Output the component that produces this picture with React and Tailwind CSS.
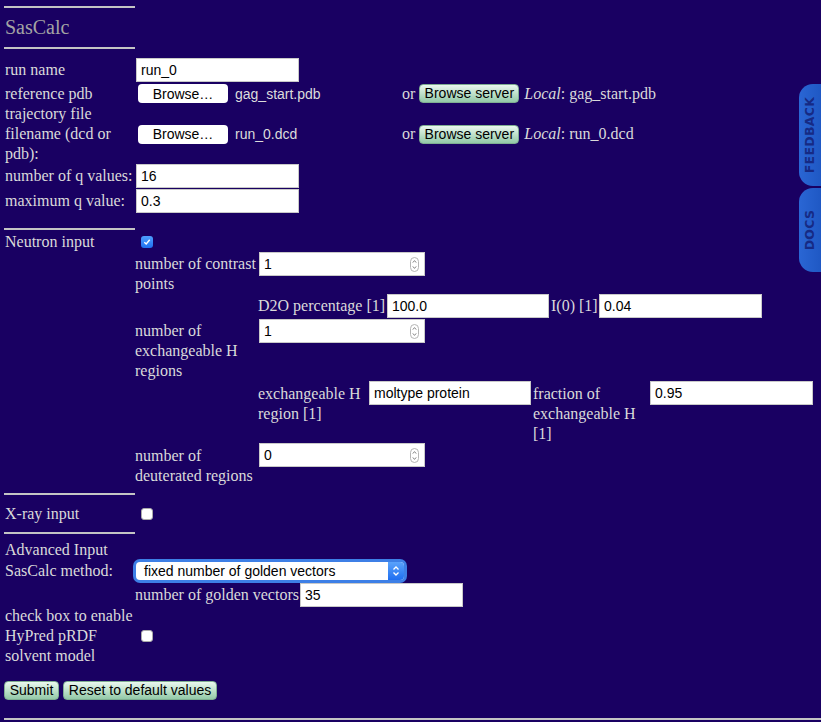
import React from "react";

const Rule = ({ className = "w-[131px]" }) => (
    <div className={`h-[2px] bg-[#c4c4c4] ${className}`} />
);

const TextBox = ({ value, width = "w-[163px]" }) => (
    <div className={`h-[24px] ${width} shrink-0 border border-[#c9c9c9] bg-white px-[4px] font-['Liberation_Sans',sans-serif] text-[14px] leading-[22px] text-black`}>
        {value}
    </div>
);

const Spinner = ({ value }) => (
    <div className="flex h-[24px] w-[166px] shrink-0 items-center justify-between border border-[#c9c9c9] bg-white pl-[4px] pr-[5px] font-['Liberation_Sans',sans-serif] text-[14px] leading-[22px] text-black">
        <span>{value}</span>
        <span className="flex h-[15px] w-[9px] flex-col items-center justify-center rounded-full border border-[#b5b5b5]">
            <svg width="5" height="11" viewBox="0 0 5 11">
                <path d="M0.8 3.6 L2.5 1.6 L4.2 3.6" fill="none" stroke="#777" strokeWidth="0.9" />
                <path d="M0.8 7.4 L2.5 9.4 L4.2 7.4" fill="none" stroke="#777" strokeWidth="0.9" />
            </svg>
        </span>
    </div>
);

const MintButton = ({ children, className = "" }) => (
    <span className={`inline-flex h-[19px] shrink-0 items-center justify-center whitespace-nowrap rounded-[4px] border border-[#7fae92] bg-gradient-to-b from-[#eaf8ef] to-[#93c9a8] font-['Liberation_Sans',sans-serif] text-[14px] leading-[17px] text-black ${className}`}>
        {children}
    </span>
);

const Checkbox = ({ checked }) =>
    checked ? (
        <span className="flex h-[12px] w-[12px] items-center justify-center rounded-[3px] bg-gradient-to-b from-[#4fa0ff] to-[#1f6ff0]">
            <svg width="8" height="8" viewBox="0 0 8 8">
                <path d="M1.3 4.2 L3.2 6 L6.7 1.8" fill="none" stroke="white" strokeWidth="1.4" />
            </svg>
        </span>
    ) : (
        <span className="block h-[12px] w-[12px] rounded-[3px] border border-[#aaa] bg-white" />
    );

const FileRow = ({ label, file, local, height, lines }) => (
    <div className={`flex items-center ${height}`}>
        <div className="w-[132px] whitespace-nowrap pl-[1px]">{lines || label}</div>
        <div className="flex w-[266px] items-center">
            <span className="ml-[2px] inline-flex h-[19px] w-[90px] items-center justify-center rounded-[4px] bg-white font-['Liberation_Sans',sans-serif] text-[14px] text-black">
                Browse…
            </span>
            <span className="ml-[7px] font-['Liberation_Sans',sans-serif] text-[14px] text-[#dcdcdc]">{file}</span>
        </div>
        <span>or</span>
        <MintButton className="ml-[4px] w-[100px]">Browse server</MintButton>
        <span className="ml-[5px]">
            <i>Local</i>: {local}
        </span>
    </div>
);

const SideTab = ({ label, className }) => (
    <div className={`absolute right-0 flex w-[22px] items-center justify-center rounded-l-[14px] bg-gradient-to-r from-[#2a66d4] to-[#1f58c4] ${className}`}>
        <span className="-rotate-90 whitespace-nowrap font-['DejaVu_Sans',sans-serif] text-[12.5px] font-bold tracking-[0.3px] text-[#162a84]">
            {label}
        </span>
    </div>
);

export default function App() {
    return (
        <div className="relative min-h-screen w-full overflow-hidden bg-[#190062] pt-[6px] font-['Liberation_Serif',serif] text-[16px] leading-[20px] text-[#dadada]">
            <SideTab label="FEEDBACK" className="top-[84px] h-[102px]" />
            <SideTab label="DOCS" className="top-[188px] h-[84px]" />

            <div className="pl-[4px]">
                <Rule />
                <h1 className="pl-[1px] pt-[8px] pb-[8px] text-[20px] leading-[23px] text-[#a4a4a4]">SasCalc</h1>
                <Rule />

                <div className="mt-[9px] flex h-[25px] items-start">
                    <div className="w-[132px] pl-[1px] pt-[2px]">run name</div>
                    <TextBox value="run_0" />
                </div>

                <FileRow label="reference pdb" file="gag_start.pdb" local="gag_start.pdb" height="h-[21px]" />
                <FileRow
                    lines={
                        <>
                            trajectory file
                            <br />
                            filename (dcd or
                            <br />
                            pdb):
                        </>
                    }
                    file="run_0.dcd"
                    local="run_0.dcd"
                    height="h-[60px]"
                />

                <div className="flex h-[25px] items-start">
                    <div className="w-[132px] whitespace-nowrap pl-[1px] pt-[2px]">number of q values:</div>
                    <TextBox value="16" />
                </div>
                <div className="flex h-[25px] items-start">
                    <div className="w-[132px] pl-[1px] pt-[2px]">maximum q value:</div>
                    <TextBox value="0.3" />
                </div>

                <Rule className="mt-[14px] w-[131px]" />

                <div className="mt-[1px] flex h-[21px] items-center">
                    <div className="w-[137px] pl-[1px]">Neutron input</div>
                    <Checkbox checked />
                </div>

                <div className="ml-[131px]">
                    <div className="flex h-[42px] items-start">
                        <div className="w-[124px] whitespace-nowrap pt-[2px]">
                            number of contrast
                            <br />
                            points
                        </div>
                        <Spinner value="1" />
                    </div>

                    <div className="ml-[123px] flex h-[25px] items-start">
                        <div className="w-[129px] whitespace-nowrap pt-[2px]">D2O percentage [1]</div>
                        <TextBox value="100.0" width="w-[162px]" />
                        <div className="ml-[2px] w-[48px] whitespace-nowrap pt-[2px]">I(0) [1]</div>
                        <TextBox value="0.04" />
                    </div>

                    <div className="flex h-[62px] items-start">
                        <div className="w-[124px] whitespace-nowrap pt-[2px]">
                            number of
                            <br />
                            exchangeable H
                            <br />
                            regions
                        </div>
                        <Spinner value="1" />
                    </div>

                    <div className="ml-[123px] flex h-[62px] items-start">
                        <div className="w-[111px] whitespace-nowrap pt-[3px]">
                            exchangeable H
                            <br />
                            region [1]
                        </div>
                        <TextBox value="moltype protein" width="w-[162px]" />
                        <div className="ml-[2px] w-[117px] whitespace-nowrap pt-[3px]">
                            fraction of
                            <br />
                            exchangeable H
                            <br />
                            [1]
                        </div>
                        <TextBox value="0.95" />
                    </div>

                    <div className="flex h-[42px] items-start">
                        <div className="w-[124px] whitespace-nowrap pt-[3px]">
                            number of
                            <br />
                            deuterated regions
                        </div>
                        <Spinner value="0" />
                    </div>
                </div>

                <Rule className="mt-[8px] w-[131px]" />

                <div className="flex h-[37px] items-center">
                    <div className="w-[137px] pl-[1px]">X-ray input</div>
                    <Checkbox />
                </div>

                <Rule />

                <div className="mt-[6px] h-[19px] pl-[1px]">Advanced Input</div>

                <div className="flex h-[24px] items-start">
                    <div className="w-[132px] whitespace-nowrap pl-[1px] pt-[2px]">SasCalc method:</div>
                    <div className="mt-[3px] flex h-[18px] w-[268px] items-center justify-between rounded-[4px] bg-white pl-[8px] font-['Liberation_Sans',sans-serif] text-[14px] text-black shadow-[0_0_0_3px_#3d7fe6]">
                        <span>fixed number of golden vectors</span>
                        <span className="flex h-[18px] w-[16px] items-center justify-center rounded-r-[4px] bg-gradient-to-b from-[#5aa2fb] to-[#1e6ef0]">
                            <svg width="8" height="12" viewBox="0 0 8 12">
                                <path d="M1.5 4.5 L4 2 L6.5 4.5" fill="none" stroke="white" strokeWidth="1.3" />
                                <path d="M1.5 7.5 L4 10 L6.5 7.5" fill="none" stroke="white" strokeWidth="1.3" />
                            </svg>
                        </span>
                    </div>
                </div>

                <div className="ml-[131px] flex h-[23px] items-start">
                    <div className="w-[165px] whitespace-nowrap pt-[2px]">number of golden vectors</div>
                    <TextBox value="35" />
                </div>

                <div className="flex h-[60px] items-center">
                    <div className="w-[137px] whitespace-nowrap pl-[1px]">
                        check box to enable
                        <br />
                        HyPred pRDF
                        <br />
                        solvent model
                    </div>
                    <Checkbox />
                </div>

                <div className="mt-[15px] flex gap-[4px]">
                    <MintButton className="w-[55px]">Submit</MintButton>
                    <MintButton className="w-[154px]">Reset to default values</MintButton>
                </div>

                <Rule className="mt-[18px] w-full" />
            </div>
        </div>
    );
}
